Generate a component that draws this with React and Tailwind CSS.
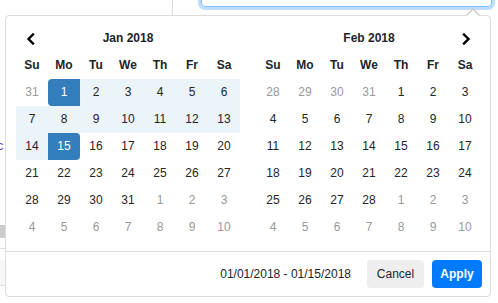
const JAN = [
  [[31, 'off'], [1, 'start'], [2, 'in'], [3, 'in'], [4, 'in'], [5, 'in'], [6, 'in']],
  [[7, 'in'], [8, 'in'], [9, 'in'], [10, 'in'], [11, 'in'], [12, 'in'], [13, 'in']],
  [[14, 'in'], [15, 'end'], [16], [17], [18], [19], [20]],
  [[21], [22], [23], [24], [25], [26], [27]],
  [[28], [29], [30], [31], [1, 'off'], [2, 'off'], [3, 'off']],
  [[4, 'off'], [5, 'off'], [6, 'off'], [7, 'off'], [8, 'off'], [9, 'off'], [10, 'off']],
]

const FEB = [
  [[28, 'off'], [29, 'off'], [30, 'off'], [31, 'off'], [1], [2], [3]],
  [[4], [5], [6], [7], [8], [9], [10]],
  [[11], [12], [13], [14], [15], [16], [17]],
  [[18], [19], [20], [21], [22], [23], [24]],
  [[25], [26], [27], [28], [1, 'off'], [2, 'off'], [3, 'off']],
  [[4, 'off'], [5, 'off'], [6, 'off'], [7, 'off'], [8, 'off'], [9, 'off'], [10, 'off']],
]

const DAYS = ['Su', 'Mo', 'Tu', 'We', 'Th', 'Fr', 'Sa']

const cellStyle = {
  off: 'text-[#999]',
  in: 'bg-[#ebf4f8] text-[#212529]',
  start: 'bg-[#357ebd] text-white rounded-l-[4px]',
  end: 'bg-[#357ebd] text-white rounded-r-[4px]',
}

function Chevron({ dir }) {
  return (
    <svg width="10" height="12" viewBox="0 0 10 12" fill="none">
      <path
        d={dir === 'left' ? 'M7 1.5 L2.5 6 L7 10.5' : 'M3 1.5 L7.5 6 L3 10.5'}
        stroke="#000"
        strokeWidth="2.4"
        strokeLinecap="square"
      />
    </svg>
  )
}

function Calendar({ title, weeks, prev, next }) {
  return (
    <div className="grid grid-cols-[repeat(7,32px)] auto-rows-[27px] w-[224px] text-[12px] leading-[27px] text-center">
      <div className="flex items-center justify-center pr-[3px]">{prev && <Chevron dir="left" />}</div>
      <div className="col-span-5 font-bold text-[#212529]">{title}</div>
      <div className="flex items-center justify-center pl-[1px]">{next && <Chevron dir="right" />}</div>
      {DAYS.map((d) => (
        <div key={d} className="font-bold text-[#212529]">{d}</div>
      ))}
      {weeks.flat().map(([n, kind], i) => (
        <div key={i} className={kind ? cellStyle[kind] : 'text-[#212529]'}>{n}</div>
      ))}
    </div>
  )
}

export default function App() {
  return (
    <div className="relative w-[498px] h-[303px] overflow-hidden bg-white font-['Liberation_Sans',Arial,sans-serif]">
      {/* page behind the picker */}
      <div className="absolute left-[172px] top-0 h-[15px] w-px bg-[#ddd]" />
      <div className="absolute left-[201px] top-[-30px] w-[291px] h-[37px] rounded-[4px] border border-[#80bdff] shadow-[0_0_0_3px_rgba(0,123,255,0.25)]" />
      <div className="absolute left-[-6px] top-[137px] text-[12px] text-[#6f42c1]">fc</div>
      <div className="absolute left-0 top-[225px] w-[5px] h-[13px] bg-[#ccc]" />
      <div className="absolute left-0 top-[248px] w-[5px] h-px bg-[#ddd]" />
      <div className="absolute left-0 top-[260px] w-[5px] h-[26px] bg-[#f7f7f7] border-b border-[#ddd]" />

      {/* picker */}
      <div className="absolute left-[5px] top-[15px] w-[486px] h-[282px] rounded-[4px] border border-[#ddd] bg-white">
        <div className="absolute left-[460px] top-[-8px] w-0 h-0 border-x-[7px] border-x-transparent border-b-[7px] border-b-[#ccc]" />
        <div className="absolute left-[461px] top-[-6px] w-0 h-0 border-x-[6px] border-x-transparent border-b-[6px] border-b-white" />

        <div className="flex pt-[9px] pl-[10px]">
          <Calendar title="Jan 2018" weeks={JAN} prev />
          <div className="ml-[17px]">
            <Calendar title="Feb 2018" weeks={FEB} next />
          </div>
        </div>

        <div className="mt-[10px] border-t border-[#ddd] flex items-center justify-end gap-[8px] pt-[8px] pr-[8px] text-[12px]">
          <span className="mr-[8px] text-[#212529]">01/01/2018 - 01/15/2018</span>
          <button className="h-[28px] w-[57px] rounded-[4px] bg-[#eee] text-[#212529]">Cancel</button>
          <button className="h-[28px] w-[50px] rounded-[4px] bg-[#007bff] text-white font-bold">Apply</button>
        </div>
      </div>
    </div>
  )
}
